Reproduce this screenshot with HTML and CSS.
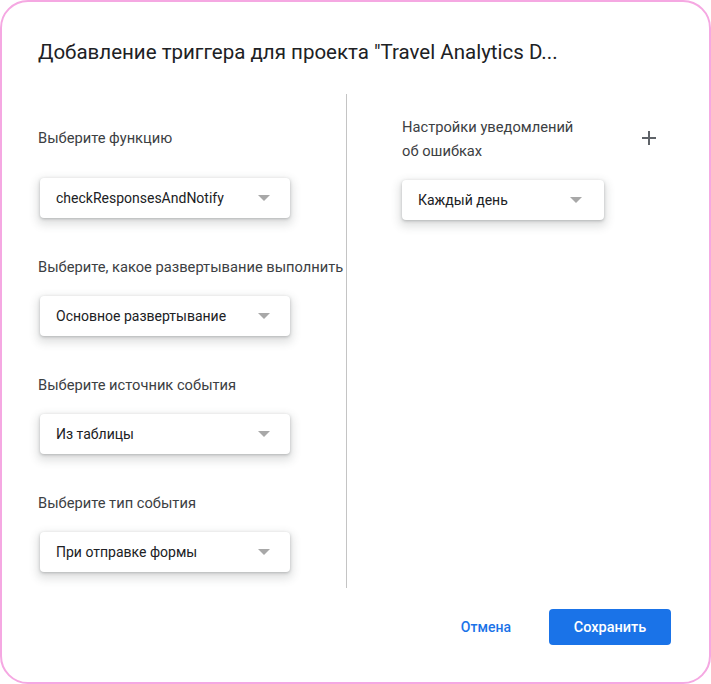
FILE: index.html
```html
<!DOCTYPE html>
<html lang="ru">
<head>
    <meta charset="UTF-8">
    <meta name="viewport" content="width=device-width, initial-scale=1.0">
    <title>Добавление триггера</title>
    <link rel="stylesheet" href="styles.css">
</head>
<body>
    <div class="dialog">
        <div class="dialog-title">Добавление триггера для проекта "Travel Analytics D...</div>

        <div class="dialog-body">
            <div class="column left">
                <div class="field first">
                    <div class="label">Выберите функцию</div>
                    <div class="select wide">
                        <span>checkResponsesAndNotify</span>
                        <span class="arrow"></span>
                    </div>
                </div>
                <div class="field">
                    <div class="label">Выберите, какое развертывание выполнить</div>
                    <div class="select wide">
                        <span>Основное развертывание</span>
                        <span class="arrow"></span>
                    </div>
                </div>
                <div class="field">
                    <div class="label">Выберите источник события</div>
                    <div class="select wide">
                        <span>Из таблицы</span>
                        <span class="arrow"></span>
                    </div>
                </div>
                <div class="field">
                    <div class="label">Выберите тип события</div>
                    <div class="select wide">
                        <span>При отправке формы</span>
                        <span class="arrow"></span>
                    </div>
                </div>
            </div>

            <div class="divider"></div>

            <div class="column right">
                <div class="field">
                    <div class="label-row">
                        <div class="label">Настройки уведомлений<br>об ошибках</div>
                        <button class="add-btn" aria-label="Добавить">
                            <svg width="24" height="24" viewBox="0 0 24 24">
                                <path d="M12 5v14M5 12h14" stroke="#5f6368" stroke-width="2" fill="none"/>
                            </svg>
                        </button>
                    </div>
                    <div class="select narrow">
                        <span>Каждый день</span>
                        <span class="arrow"></span>
                    </div>
                </div>
            </div>
        </div>

        <div class="dialog-actions">
            <button class="btn text">Отмена</button>
            <button class="btn primary">Сохранить</button>
        </div>
    </div>
</body>
</html>
```

FILE: styles.css
```css
body {
    margin: 0;
    background: #fff;
    font-family: Roboto, "Liberation Sans", sans-serif;
    color: #202124;
}
.dialog {
    width: 711px;
    height: 684px;
    box-sizing: border-box;
    border: 2px solid #f5a8e2;
    border-radius: 28px;
    padding: 38px 38px 0 36px;
    background: #fff;
}
.dialog-title {
    font-size: 20.5px;
    line-height: 24px;
    color: #202124;
    white-space: nowrap;
}
.dialog-body {
    display: flex;
    margin-top: 30px;
    height: 494px;
}
.column.left {
    width: 308px;
    padding-top: 32px;
}
.column.right {
    flex: 1;
    padding-top: 21px;
    padding-left: 55px;
    padding-right: 10px;
}
.divider {
    width: 1px;
    background: #c4c4c4;
}
.field {
    margin-bottom: 37px;
}
.label {
    font-size: 14.7px;
    line-height: 24px;
    color: #3c4043;
    margin-bottom: 17px;
    white-space: nowrap;
}
.field.first .label {
    margin-bottom: 28px;
}
.label-row {
    display: flex;
    justify-content: space-between;
    align-items: flex-start;
}
.add-btn {
    border: none;
    background: none;
    padding: 0;
    margin-top: 11px;
    width: 24px;
    height: 24px;
    cursor: pointer;
}
.select {
    display: flex;
    align-items: center;
    justify-content: space-between;
    box-sizing: border-box;
    height: 40px;
    padding: 0 20px 0 16px;
    background: #fff;
    border-radius: 4px;
    font-size: 14px;
    color: #202124;
    box-shadow: 0 1px 3px rgba(60, 64, 67, 0.3), 0 4px 8px 3px rgba(60, 64, 67, 0.15);
}
.select.wide {
    width: 250px;
    margin-left: 2px;
}
.select.narrow {
    width: 202px;
    padding-right: 22px;
}
.arrow {
    width: 0;
    height: 0;
    border-left: 6px solid transparent;
    border-right: 6px solid transparent;
    border-top: 6px solid #a8a8a8;
}
.dialog-actions {
    display: flex;
    justify-content: flex-end;
    gap: 14px;
    margin-top: 21px;
}
.btn {
    height: 36px;
    border: none;
    border-radius: 4px;
    font-family: Roboto, "Liberation Sans", sans-serif;
    font-size: 14px;
    font-weight: 500;
    cursor: pointer;
    padding: 0 24px;
}
.btn.text {
    background: none;
    color: #1a73e8;
}
.btn.primary {
    background: #1a73e8;
    color: #fff;
    width: 122px;
    font-size: 14.5px;
}
```
